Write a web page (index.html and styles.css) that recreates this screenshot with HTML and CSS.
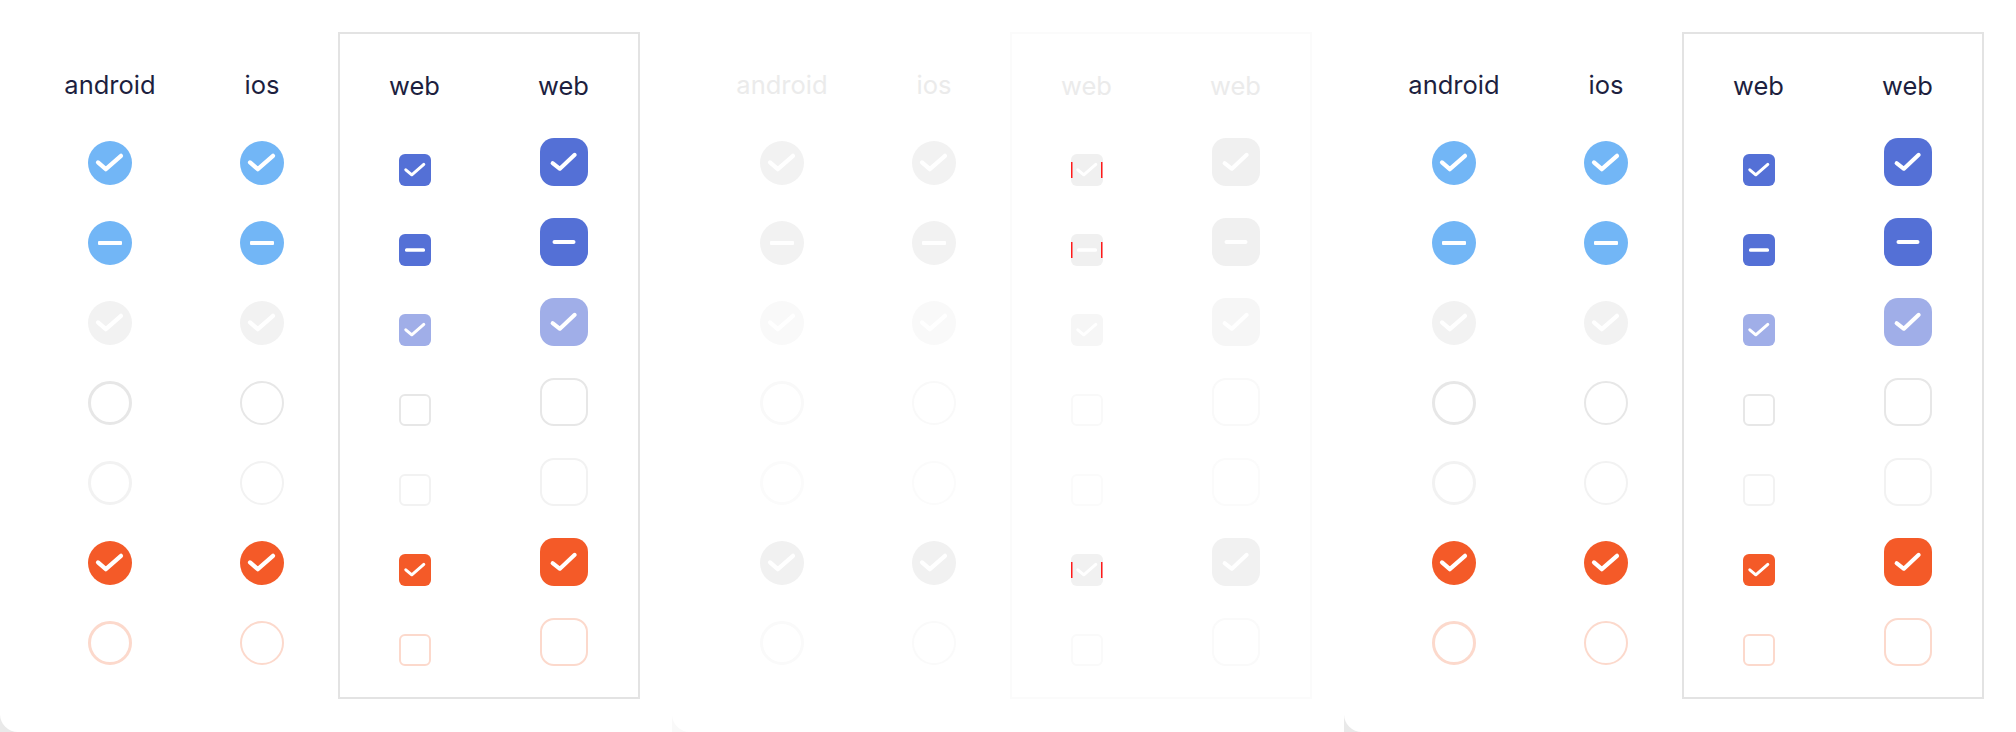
FILE: index.html
```html
<!DOCTYPE html>
<html lang="en">
<head>
<meta charset="utf-8">
<title>Checkbox states</title>
<link rel="stylesheet" href="styles.css">
</head>
<body>
<svg class="defs" width="0" height="0" aria-hidden="true">
  <symbol id="chk-round" viewBox="0 0 44 44"><path d="M10 21.4 L17.8 28.2 L33 14.8" fill="none" stroke="#fff" stroke-width="4.2" stroke-linecap="round" stroke-linejoin="round"/></symbol>
  <symbol id="dash-round" viewBox="0 0 44 44"><rect x="10" y="20" width="24" height="4" rx="1" fill="#fff"/></symbol>
  <symbol id="chk-sm" viewBox="0 0 32 32"><path d="M6.8 15.8 L12.8 20.8 L24.8 10.4" fill="none" stroke="#fff" stroke-width="3" stroke-linecap="round" stroke-linejoin="round"/></symbol>
  <symbol id="dash-sm" viewBox="0 0 32 32"><rect x="6" y="14.3" width="20" height="3.4" rx="1.5" fill="#fff"/></symbol>
  <symbol id="chk-lg" viewBox="0 0 48 48"><path d="M12.6 25.2 L19.9 30.8 L34.7 16.8" fill="none" stroke="#fff" stroke-width="4" stroke-linecap="round" stroke-linejoin="round"/></symbol>
  <symbol id="dash-lg" viewBox="0 0 48 48"><rect x="12.5" y="22" width="23" height="4" rx="2" fill="#fff"/></symbol>
</svg>

<main class="board">

  <!-- Card 1 -->
  <div class="slot">
    <section class="card">
      <div class="group">
        <div class="col col--native">
          <div class="head">android</div>
          <div class="cell"><span class="ctl round on"><svg><use href="#chk-round"/></svg></span></div>
          <div class="cell"><span class="ctl round on"><svg><use href="#dash-round"/></svg></span></div>
          <div class="cell"><span class="ctl round on-dis"><svg><use href="#chk-round"/></svg></span></div>
          <div class="cell"><span class="ctl round thick off"></span></div>
          <div class="cell"><span class="ctl round thick off-dis"></span></div>
          <div class="cell"><span class="ctl round err"><svg><use href="#chk-round"/></svg></span></div>
          <div class="cell"><span class="ctl round thick off-err"></span></div>
        </div>
        <div class="col col--native">
          <div class="head">ios</div>
          <div class="cell"><span class="ctl round on"><svg><use href="#chk-round"/></svg></span></div>
          <div class="cell"><span class="ctl round on"><svg><use href="#dash-round"/></svg></span></div>
          <div class="cell"><span class="ctl round on-dis"><svg><use href="#chk-round"/></svg></span></div>
          <div class="cell"><span class="ctl round off"></span></div>
          <div class="cell"><span class="ctl round off-dis"></span></div>
          <div class="cell"><span class="ctl round err"><svg><use href="#chk-round"/></svg></span></div>
          <div class="cell"><span class="ctl round off-err"></span></div>
        </div>
      </div>
      <div class="webbox">
        <div class="col col--web">
          <div class="head">web</div>
          <div class="cell"><span class="ctl sq-sm sq-on"><svg><use href="#chk-sm"/></svg></span></div>
          <div class="cell"><span class="ctl sq-sm sq-on"><svg><use href="#dash-sm"/></svg></span></div>
          <div class="cell"><span class="ctl sq-sm sq-on-dis"><svg><use href="#chk-sm"/></svg></span></div>
          <div class="cell"><span class="ctl sq-sm off"></span></div>
          <div class="cell"><span class="ctl sq-sm off-dis"></span></div>
          <div class="cell"><span class="ctl sq-sm err"><svg><use href="#chk-sm"/></svg></span></div>
          <div class="cell"><span class="ctl sq-sm off-err"></span></div>
        </div>
        <div class="col col--web">
          <div class="head">web</div>
          <div class="cell"><span class="ctl sq-lg sq-on"><svg><use href="#chk-lg"/></svg></span></div>
          <div class="cell"><span class="ctl sq-lg sq-on"><svg><use href="#dash-lg"/></svg></span></div>
          <div class="cell"><span class="ctl sq-lg sq-on-dis"><svg><use href="#chk-lg"/></svg></span></div>
          <div class="cell"><span class="ctl sq-lg off"></span></div>
          <div class="cell"><span class="ctl sq-lg off-dis"></span></div>
          <div class="cell"><span class="ctl sq-lg err"><svg><use href="#chk-lg"/></svg></span></div>
          <div class="cell"><span class="ctl sq-lg off-err"></span></div>
        </div>
      </div>
    </section>
  </div>

  <!-- Card 2 (muted) -->
  <div class="slot slot--muted">
    <section class="card card--muted">
      <div class="group">
        <div class="col col--native">
          <div class="head">android</div>
          <div class="cell"><span class="ctl round on"><svg><use href="#chk-round"/></svg></span></div>
          <div class="cell"><span class="ctl round on"><svg><use href="#dash-round"/></svg></span></div>
          <div class="cell"><span class="ctl round on-dis"><svg><use href="#chk-round"/></svg></span></div>
          <div class="cell"><span class="ctl round thick off"></span></div>
          <div class="cell"><span class="ctl round thick off-dis"></span></div>
          <div class="cell"><span class="ctl round err"><svg><use href="#chk-round"/></svg></span></div>
          <div class="cell"><span class="ctl round thick off-err"></span></div>
        </div>
        <div class="col col--native">
          <div class="head">ios</div>
          <div class="cell"><span class="ctl round on"><svg><use href="#chk-round"/></svg></span></div>
          <div class="cell"><span class="ctl round on"><svg><use href="#dash-round"/></svg></span></div>
          <div class="cell"><span class="ctl round on-dis"><svg><use href="#chk-round"/></svg></span></div>
          <div class="cell"><span class="ctl round off"></span></div>
          <div class="cell"><span class="ctl round off-dis"></span></div>
          <div class="cell"><span class="ctl round err"><svg><use href="#chk-round"/></svg></span></div>
          <div class="cell"><span class="ctl round off-err"></span></div>
        </div>
      </div>
      <div class="webbox">
        <div class="col col--web">
          <div class="head">web</div>
          <div class="cell"><span class="ctl sq-sm sq-on edge"><svg><use href="#chk-sm"/></svg></span></div>
          <div class="cell"><span class="ctl sq-sm sq-on edge"><svg><use href="#dash-sm"/></svg></span></div>
          <div class="cell"><span class="ctl sq-sm sq-on-dis"><svg><use href="#chk-sm"/></svg></span></div>
          <div class="cell"><span class="ctl sq-sm off"></span></div>
          <div class="cell"><span class="ctl sq-sm off-dis"></span></div>
          <div class="cell"><span class="ctl sq-sm err edge"><svg><use href="#chk-sm"/></svg></span></div>
          <div class="cell"><span class="ctl sq-sm off-err"></span></div>
        </div>
        <div class="col col--web">
          <div class="head">web</div>
          <div class="cell"><span class="ctl sq-lg sq-on"><svg><use href="#chk-lg"/></svg></span></div>
          <div class="cell"><span class="ctl sq-lg sq-on"><svg><use href="#dash-lg"/></svg></span></div>
          <div class="cell"><span class="ctl sq-lg sq-on-dis"><svg><use href="#chk-lg"/></svg></span></div>
          <div class="cell"><span class="ctl sq-lg off"></span></div>
          <div class="cell"><span class="ctl sq-lg off-dis"></span></div>
          <div class="cell"><span class="ctl sq-lg err"><svg><use href="#chk-lg"/></svg></span></div>
          <div class="cell"><span class="ctl sq-lg off-err"></span></div>
        </div>
      </div>
    </section>
  </div>

  <!-- Card 3 -->
  <div class="slot">
    <section class="card">
      <div class="group">
        <div class="col col--native">
          <div class="head">android</div>
          <div class="cell"><span class="ctl round on"><svg><use href="#chk-round"/></svg></span></div>
          <div class="cell"><span class="ctl round on"><svg><use href="#dash-round"/></svg></span></div>
          <div class="cell"><span class="ctl round on-dis"><svg><use href="#chk-round"/></svg></span></div>
          <div class="cell"><span class="ctl round thick off"></span></div>
          <div class="cell"><span class="ctl round thick off-dis"></span></div>
          <div class="cell"><span class="ctl round err"><svg><use href="#chk-round"/></svg></span></div>
          <div class="cell"><span class="ctl round thick off-err"></span></div>
        </div>
        <div class="col col--native">
          <div class="head">ios</div>
          <div class="cell"><span class="ctl round on"><svg><use href="#chk-round"/></svg></span></div>
          <div class="cell"><span class="ctl round on"><svg><use href="#dash-round"/></svg></span></div>
          <div class="cell"><span class="ctl round on-dis"><svg><use href="#chk-round"/></svg></span></div>
          <div class="cell"><span class="ctl round off"></span></div>
          <div class="cell"><span class="ctl round off-dis"></span></div>
          <div class="cell"><span class="ctl round err"><svg><use href="#chk-round"/></svg></span></div>
          <div class="cell"><span class="ctl round off-err"></span></div>
        </div>
      </div>
      <div class="webbox">
        <div class="col col--web">
          <div class="head">web</div>
          <div class="cell"><span class="ctl sq-sm sq-on"><svg><use href="#chk-sm"/></svg></span></div>
          <div class="cell"><span class="ctl sq-sm sq-on"><svg><use href="#dash-sm"/></svg></span></div>
          <div class="cell"><span class="ctl sq-sm sq-on-dis"><svg><use href="#chk-sm"/></svg></span></div>
          <div class="cell"><span class="ctl sq-sm off"></span></div>
          <div class="cell"><span class="ctl sq-sm off-dis"></span></div>
          <div class="cell"><span class="ctl sq-sm err"><svg><use href="#chk-sm"/></svg></span></div>
          <div class="cell"><span class="ctl sq-sm off-err"></span></div>
        </div>
        <div class="col col--web">
          <div class="head">web</div>
          <div class="cell"><span class="ctl sq-lg sq-on"><svg><use href="#chk-lg"/></svg></span></div>
          <div class="cell"><span class="ctl sq-lg sq-on"><svg><use href="#dash-lg"/></svg></span></div>
          <div class="cell"><span class="ctl sq-lg sq-on-dis"><svg><use href="#chk-lg"/></svg></span></div>
          <div class="cell"><span class="ctl sq-lg off"></span></div>
          <div class="cell"><span class="ctl sq-lg off-dis"></span></div>
          <div class="cell"><span class="ctl sq-lg err"><svg><use href="#chk-lg"/></svg></span></div>
          <div class="cell"><span class="ctl sq-lg off-err"></span></div>
        </div>
      </div>
    </section>
  </div>

</main>
</body>
</html>
```

FILE: styles.css
```css
html, body {
  margin: 0;
  padding: 0;
}

body {
  background: #e9e9e9;
  font-family: Inter, "Noto Sans", "Liberation Sans", sans-serif;
  overflow: hidden;
}

.defs {
  position: absolute;
  width: 0;
  height: 0;
  overflow: hidden;
}

.board {
  display: flex;
  width: 2016px;
  height: 732px;
}

.slot {
  width: 672px;
  height: 732px;
  background: #e9e9e9;
}

.slot--muted {
  background: #f9f9f9;
}

.card {
  --ink: #1d1f3f;
  --blue: #72b6f6;
  --indigo: #5470d6;
  --indigo-dis: #a0aee8;
  --grey-dis: #f2f2f2;
  --err: #f45a28;
  --line: #e7e7e7;
  --line-dis: #f2f2f2;
  --line-err: #fcd9cc;
  --frame: #e3e3e3;

  box-sizing: border-box;
  width: 672px;
  height: 732px;
  background: #fff;
  border-bottom-left-radius: 18px;
  display: flex;
  align-items: flex-start;
  padding-left: 34px;
  color: var(--ink);
}

.card--muted {
  --ink: #ebebeb;
  --blue: #f2f2f2;
  --indigo: #f0f0f0;
  --indigo-dis: #f6f6f6;
  --grey-dis: #f9f9f9;
  --err: #f1f1f1;
  --line: #f9f9f9;
  --line-dis: #fbfbfb;
  --line-err: #fafafa;
  --frame: #fbfbfb;
}

.group {
  display: flex;
  padding-top: 33px;
}

.webbox {
  display: flex;
  margin-top: 32px;
  border: 2px solid var(--frame);
  padding-bottom: 31px;
}

.col {
  display: flex;
  flex-direction: column;
}

.col--native {
  width: 152px;
}

.col--web {
  width: 149px;
}

.head {
  box-sizing: border-box;
  height: 72px;
  padding-top: 38px;
  font-size: 25.5px;
  line-height: 28px;
  text-align: center;
  color: var(--ink);
}

.cell {
  height: 80px;
  display: flex;
  justify-content: center;
  align-items: flex-end;
}

.ctl {
  box-sizing: border-box;
  display: flex;
  align-items: center;
  justify-content: center;
  flex: none;
}

.ctl svg {
  display: block;
  width: 100%;
  height: 100%;
}

.round {
  width: 44px;
  height: 44px;
  border-radius: 50%;
}

.sq-sm {
  width: 32px;
  height: 32px;
  border-radius: 6px;
}

.sq-lg {
  width: 48px;
  height: 48px;
  border-radius: 14px;
}

.on { background: var(--blue); }
.on-dis { background: var(--grey-dis); }
.sq-on { background: var(--indigo); }
.sq-on-dis { background: var(--indigo-dis); }
.err { background: var(--err); }

.off { border: 2px solid var(--line); }
.off-dis { border: 2px solid var(--line-dis); }
.off-err { border: 2px solid var(--line-err); }

.round.thick { border-width: 3px; }

.edge {
  background:
    linear-gradient(#ff1a1a, #ff1a1a) left center / 1.5px 16px no-repeat,
    linear-gradient(#ff1a1a, #ff1a1a) right center / 1.5px 16px no-repeat,
    var(--indigo);
}

.err.edge {
  background:
    linear-gradient(#ff1a1a, #ff1a1a) left center / 1.5px 16px no-repeat,
    linear-gradient(#ff1a1a, #ff1a1a) right center / 1.5px 16px no-repeat,
    var(--err);
}
```
